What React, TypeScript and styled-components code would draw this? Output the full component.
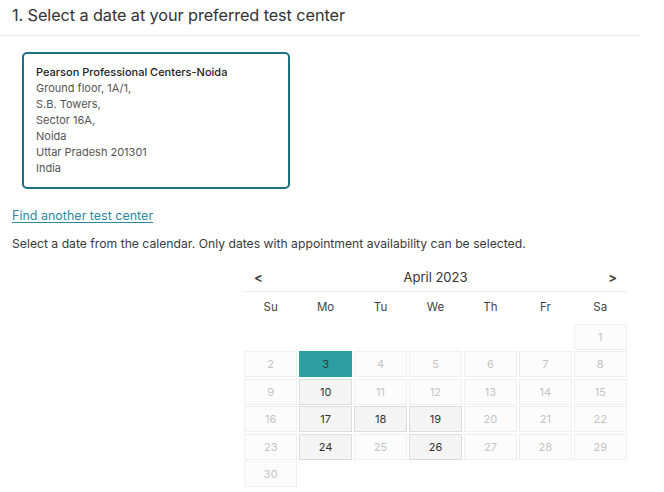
import React from "react";
import styled, { createGlobalStyle } from "styled-components";

const Global = createGlobalStyle`
  body {
    margin: 0;
    background: #ffffff;
    font-family: Inter, "Noto Sans", Arial, sans-serif;
    color: #333333;
  }
`;

const Page = styled.div`
  width: 664px;
  height: 492px;
  overflow: hidden;
`;

const TitleBar = styled.div`
  width: 640px;
  height: 36px;
  box-sizing: border-box;
  border-bottom: 1px solid #e6e6e6;
  display: flex;
  align-items: center;
  padding: 0 0 5px 12px;
`;

const Title = styled.h1`
  margin: 0;
  font-size: 16.3px;
  font-weight: 400;
  color: #333;
  letter-spacing: -0.1px;
`;

const Body = styled.div`
  padding: 16px 0 0 12px;
  display: flex;
  flex-direction: column;
`;

const CenterCard = styled.div`
  margin-left: 10px;
  width: 268px;
  height: 137px;
  box-sizing: border-box;
  border: 2px solid #1f6f86;
  border-radius: 5px;
  padding: 10px 0 0 12px;
  display: flex;
  flex-direction: column;
`;

const CardLine = styled.div<{ $strong?: boolean }>`
  font-size: 11px;
  line-height: 16px;
  color: ${(p) => (p.$strong ? "#222" : "#555")};
  font-weight: ${(p) => (p.$strong ? 500 : 400)};
`;

const FindLink = styled.a`
  margin-top: 19px;
  font-size: 12.5px;
  line-height: 16px;
  color: #2b8a9c;
  text-decoration: underline;
  text-underline-offset: 2px;
  cursor: pointer;
  align-self: flex-start;
`;

const Hint = styled.p`
  margin: 12px 0 0;
  font-size: 12.2px;
  line-height: 16px;
  color: #3a3a3a;
`;

const Calendar = styled.div`
  margin: 12px 0 0 232px;
  width: 383px;
  display: flex;
  flex-direction: column;
`;

const MonthBar = styled.div`
  height: 25px;
  display: flex;
  align-items: center;
  justify-content: space-between;
  border-bottom: 1px solid #ececec;
  padding: 0 10px 2px 10px;
`;

const NavButton = styled.button`
  border: none;
  background: none;
  padding: 0;
  font: inherit;
  font-size: 13px;
  font-weight: 600;
  color: #333;
  cursor: pointer;
`;

const Month = styled.span`
  font-size: 13px;
  color: #333;
`;

const Grid = styled.div`
  display: grid;
  grid-template-columns: repeat(7, 1fr);
  column-gap: 1.5px;
  row-gap: 1.5px;
`;

const DayName = styled.div`
  height: 30px;
  display: flex;
  align-items: center;
  justify-content: center;
  font-size: 11.5px;
  color: #444;
`;

type CellKind = "off" | "open" | "picked" | "blank";

const Cell = styled.div<{ $kind: CellKind }>`
  height: 26px;
  box-sizing: border-box;
  display: flex;
  align-items: center;
  justify-content: center;
  font-size: 11px;
  border: 1px solid
    ${(p) =>
      p.$kind === "blank"
        ? "transparent"
        : p.$kind === "picked"
        ? "#2d9ea1"
        : p.$kind === "open"
        ? "#dcdcdc"
        : "#efefef"};
  background: ${(p) =>
    p.$kind === "blank"
      ? "transparent"
      : p.$kind === "picked"
      ? "#2d9ea1"
      : p.$kind === "open"
      ? "#f4f4f4"
      : "#fcfcfc"};
  color: ${(p) =>
    p.$kind === "open" ? "#333" : p.$kind === "picked" ? "#2a3a3c" : "#c4c4c4"};
  cursor: ${(p) => (p.$kind === "open" ? "pointer" : "default")};
`;

const address = [
  "Ground floor, 1A/1,",
  "S.B. Towers,",
  "Sector 16A,",
  "Noida",
  "Uttar Pradesh 201301",
  "India",
];

const dayNames = ["Su", "Mo", "Tu", "We", "Th", "Fr", "Sa"];
const openDays = new Set([10, 17, 18, 19, 24, 26]);
const pickedDay = 3;

export default function App() {
  // April 2023 starts on a Saturday
  const leading = 6;
  const cells: { day: number | null }[] = [];
  for (let i = 0; i < leading; i++) cells.push({ day: null });
  for (let d = 1; d <= 30; d++) cells.push({ day: d });

  return (
    <Page>
      <Global />
      <TitleBar>
        <Title>1. Select a date at your preferred test center</Title>
      </TitleBar>
      <Body>
        <CenterCard>
          <CardLine $strong>Pearson Professional Centers-Noida</CardLine>
          {address.map((line) => (
            <CardLine key={line}>{line}</CardLine>
          ))}
        </CenterCard>
        <FindLink>Find another test center</FindLink>
        <Hint>
          Select a date from the calendar. Only dates with appointment
          availability can be selected.
        </Hint>
        <Calendar>
          <MonthBar>
            <NavButton>&lt;</NavButton>
            <Month>April 2023</Month>
            <NavButton>&gt;</NavButton>
          </MonthBar>
          <Grid>
            {dayNames.map((n) => (
              <DayName key={n}>{n}</DayName>
            ))}
            {cells.map((c, i) => {
              const kind: CellKind =
                c.day === null
                  ? "blank"
                  : c.day === pickedDay
                  ? "picked"
                  : openDays.has(c.day)
                  ? "open"
                  : "off";
              return (
                <Cell key={i} $kind={kind}>
                  {c.day}
                </Cell>
              );
            })}
          </Grid>
        </Calendar>
      </Body>
    </Page>
  );
}
